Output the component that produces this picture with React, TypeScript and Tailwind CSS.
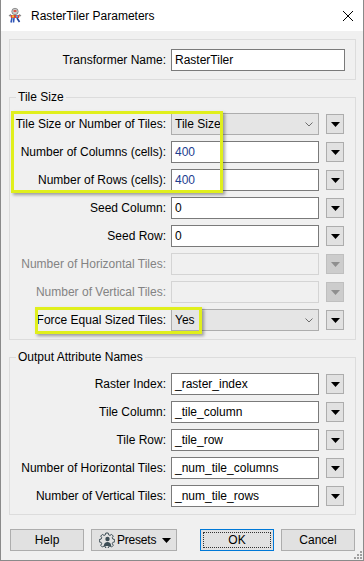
import React from 'react';

const font = { fontFamily: '"Liberation Sans", Arial, sans-serif' };

function DropButton({ disabled = false }: { disabled?: boolean }) {
  return (
    <div
      className={`ml-[7px] w-[18px] h-[20px] border flex items-center justify-center ${
        disabled ? 'bg-[#cccccc] border-[#bfbfbf]' : 'bg-[#e1e1e1] border-[#adadad]'
      }`}
    >
      <svg width="9" height="5" viewBox="0 0 9 5">
        <path d="M0 0 H9 L4.5 5 Z" fill={disabled ? '#8f8f8f' : '#000'} />
      </svg>
    </div>
  );
}

function Chevron() {
  return (
    <svg width="8" height="5" viewBox="0 0 8 5" className="mr-[5px]">
      <path d="M0.5 0.5 L4 4 L7.5 0.5" fill="none" stroke="#6d6d6d" strokeWidth="1" />
    </svg>
  );
}

type Kind = 'text' | 'combo' | 'disabled';

function Row({
  label,
  value = '',
  kind = 'text',
  valueColor = 'text-black',
}: {
  label: string;
  value?: string;
  kind?: Kind;
  valueColor?: string;
}) {
  const disabled = kind === 'disabled';
  return (
    <div className="flex items-center h-[22px]">
      <div className={`w-[156px] text-right whitespace-nowrap ${disabled ? 'text-[#838383]' : 'text-black'}`}>
        {label}
      </div>
      {kind === 'text' && (
        <div className={`ml-[5px] w-[148px] h-[22px] border border-[#7a7a7a] bg-white flex items-center pl-[3px] ${valueColor}`}>
          {value}
        </div>
      )}
      {kind === 'combo' && (
        <div className="ml-[5px] w-[148px] h-[22px] border border-[#adadad] bg-[#e5e5e5] flex items-center justify-between pl-[3px]">
          <span>{value}</span>
          <Chevron />
        </div>
      )}
      {kind === 'disabled' && (
        <div className="ml-[5px] w-[148px] h-[22px] border border-[#d4d4d4] bg-[#f0f0f0]" />
      )}
      <DropButton disabled={disabled} />
    </div>
  );
}

function Group({ title, children, className = '' }: { title?: string; children: React.ReactNode; className?: string }) {
  return (
    <div className={`relative mx-[8px] mr-[7px] border border-[#dcdcdc] ${className}`}>
      {title && (
        <span className="absolute -top-[9px] left-[6px] px-[2px] bg-[#f0f0f0] leading-[16px] text-black">{title}</span>
      )}
      {children}
    </div>
  );
}

function AppIcon() {
  return (
    <svg width="17" height="17" viewBox="0 0 17 17">
      <circle cx="8" cy="4.5" r="3.2" fill="#c9c9c9" stroke="#7d7d7d" strokeWidth="0.8" />
      <rect x="6.6" y="3.2" width="2.8" height="1.6" fill="#e23b2c" />
      <path d="M3 8 L13 8 L12 11 L4 11 Z" fill="#d9463a" />
      <rect x="5" y="8.4" width="2" height="2" fill="#f2c230" />
      <rect x="9" y="8.4" width="2" height="2" fill="#5aa0e0" />
      <path d="M5 11 L4 15.5 M7 11 L6.5 15.5" stroke="#2e54b8" strokeWidth="1.6" />
      <path d="M10 11 L12.5 15" stroke="#1d3f99" strokeWidth="1.6" />
      <path d="M2 9 L4 7.5 M14 9 L12 7.5" stroke="#8a8a8a" strokeWidth="1.2" />
    </svg>
  );
}

function PresetIcon() {
  return (
    <svg width="16" height="16" viewBox="0 0 16 16" className="flex-none">
      <g fill="none" stroke="#3c4d55" strokeWidth="1">
        <path d="M6.8 1 h2.4 l0.4 1.8 1.4 0.6 1.6-1 1.7 1.7 -1 1.6 0.6 1.4 1.8 0.4 v2.4 l-1.8 0.4 -0.6 1.4 1 1.6 -1.7 1.7 -1.6-1 -1.4 0.6 -0.4 1.8 h-2.4 l-0.4-1.8 -1.4-0.6 -1.6 1 -1.7-1.7 1-1.6 -0.6-1.4 -1.8-0.4 v-2.4 l1.8-0.4 0.6-1.4 -1-1.6 1.7-1.7 1.6 1 1.4-0.6 Z" />
      </g>
      <circle cx="8.5" cy="7" r="2.2" fill="#3c4d55" />
      <path d="M4.8 14 C5 11 6.5 10 8.5 10 C10.5 10 12 11 12.2 14 Z" fill="#3c4d55" />
    </svg>
  );
}

function Btn({ children, className = '' }: { children: React.ReactNode; className?: string }) {
  return (
    <div className={`h-[22px] border border-[#adadad] bg-[#e1e1e1] flex items-center justify-center ${className}`}>
      {children}
    </div>
  );
}

export default function App() {
  return (
    <div
      className="relative w-[364px] h-[561px] bg-[#f0f0f0] border-x border-b border-[#8a8a8a] text-[12px] text-black overflow-hidden"
      style={font}
    >
      {/* Title bar */}
      <div className="h-[31px] bg-white flex items-center pl-[7px] -mx-px">
        <AppIcon />
        <span className="ml-[7px] text-[12px]">RasterTiler Parameters</span>
        <svg width="12" height="12" viewBox="0 0 12 12" className="ml-auto mr-[10px]">
          <path d="M1 1 L11 11 M11 1 L1 11" stroke="#000" strokeWidth="1" />
        </svg>
      </div>

      {/* Transformer name */}
      <Group className="mt-[8px] pt-[9px] pb-[8px]">
        <div className="flex items-center h-[22px]">
          <div className="w-[156px] text-right">Transformer Name:</div>
          <div className="ml-[5px] w-[174px] h-[22px] border border-[#7a7a7a] bg-white flex items-center pl-[3px]">
            RasterTiler
          </div>
        </div>
      </Group>

      {/* Tile Size */}
      <Group title="Tile Size" className="mt-[17px] pt-[15px] pb-[8px]">
        <div className="flex flex-col gap-[6px]">
          <Row label="Tile Size or Number of Tiles:" value="Tile Size" kind="combo" />
          <Row label="Number of Columns (cells):" value="400" valueColor="text-[#1d3d8f]" />
          <Row label="Number of Rows (cells):" value="400" valueColor="text-[#1d3d8f]" />
          <Row label="Seed Column:" value="0" />
          <Row label="Seed Row:" value="0" />
          <Row label="Number of Horizontal Tiles:" kind="disabled" />
          <Row label="Number of Vertical Tiles:" kind="disabled" />
          <Row label="Force Equal Sized Tiles:" value="Yes" kind="combo" />
        </div>
      </Group>

      {/* Output Attribute Names */}
      <Group title="Output Attribute Names" className="mt-[17px] pt-[15px] pb-[7px]">
        <div className="flex flex-col gap-[6px]">
          <Row label="Raster Index:" value="_raster_index" />
          <Row label="Tile Column:" value="_tile_column" />
          <Row label="Tile Row:" value="_tile_row" />
          <Row label="Number of Horizontal Tiles:" value="_num_tile_columns" />
          <Row label="Number of Vertical Tiles:" value="_num_tile_rows" />
        </div>
      </Group>

      {/* Buttons */}
      <div className="flex items-center mt-[14px] pl-[9px] pr-[8px]">
        <Btn className="w-[74px]">Help</Btn>
        <Btn className="w-[86px] ml-[7px] justify-start pl-[7px]">
          <PresetIcon />
          <span className="ml-[2px] tracking-[-0.2px]">Presets</span>
          <svg width="9" height="5" viewBox="0 0 9 5" className="flex-none ml-auto mr-[5px]">
            <path d="M0 0 H9 L4.5 5 Z" fill="#000" />
          </svg>
        </Btn>
        <div className="ml-auto w-[74px] h-[22px] border border-[#0078d7] bg-[#e1e1e1] p-[2px]">
          <div className="w-full h-full border border-dotted border-[#333] flex items-center justify-center">OK</div>
        </div>
        <Btn className="w-[74px] ml-[7px]">Cancel</Btn>
      </div>

      {/* resize grip */}
      <svg width="8" height="8" viewBox="0 0 8 8" className="absolute right-[1px] bottom-[1px]">
        <g fill="#a0a0a0">
          <rect x="6" y="0" width="2" height="2" />
          <rect x="3" y="3" width="2" height="2" />
          <rect x="6" y="3" width="2" height="2" />
          <rect x="0" y="6" width="2" height="2" />
          <rect x="3" y="6" width="2" height="2" />
          <rect x="6" y="6" width="2" height="2" />
        </g>
      </svg>

      {/* highlight overlays */}
      <div className="absolute left-[10px] top-[111px] w-[212px] h-[82px] border-[3px] border-[#e0ef1c] shadow-[2px_2px_3px_rgba(0,0,0,0.35)]" />
      <div className="absolute left-[34px] top-[307px] w-[167px] h-[27px] border-[3px] border-[#e0ef1c] shadow-[2px_2px_3px_rgba(0,0,0,0.35)]" />
    </div>
  );
}
